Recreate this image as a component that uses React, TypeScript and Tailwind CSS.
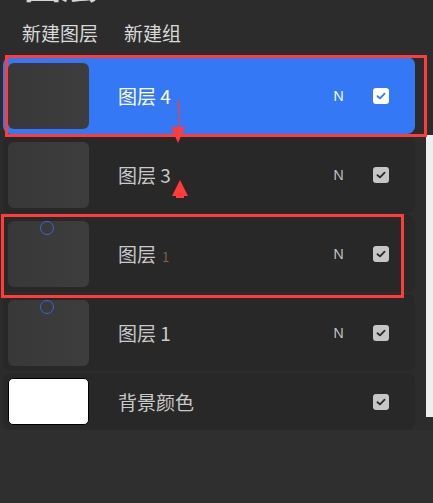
import React from "react";

type Layer = {
  name: string;
  selected?: boolean;
  dot?: boolean;
  glitch?: boolean;
  bg?: boolean;
};

const layers: Layer[] = [
  { name: "图层 4", selected: true },
  { name: "图层 3" },
  { name: "图层", dot: true, glitch: true },
  { name: "图层 1", dot: true },
  { name: "背景颜色", bg: true },
];

const Check = ({ selected }: { selected?: boolean }) => (
  <div
    className={`w-[16px] h-[16px] rounded-[3px] flex items-center justify-center ${
      selected ? "bg-white" : "bg-[#c6c6c6]"
    }`}
  >
    <svg width="10" height="8" viewBox="0 0 10 8" fill="none">
      <path
        d="M1.5 4.2 L4 6.4 L8.6 1.6"
        stroke={selected ? "#3478f6" : "#2a2a2a"}
        strokeWidth="1.8"
        strokeLinecap="round"
        strokeLinejoin="round"
      />
    </svg>
  </div>
);

const LayerRow = ({ layer }: { layer: Layer }) => {
  const rowBg = layer.selected ? "bg-[#3478f6]" : "bg-[#282828]";
  const textColor = layer.selected ? "text-white" : "text-[#cacaca]";

  if (layer.bg) {
    return (
      <div className={`h-[57px] shrink-0 rounded-[8px] flex items-center pl-[5px] ${rowBg}`}>
        <div className="w-[81px] h-[47px] rounded-[5px] bg-white border border-black" />
        <div className={`flex-1 ml-[29px] text-[19px] leading-none ${textColor}`}>
          {layer.name}
        </div>
        <div className="mr-[26px]">
          <Check />
        </div>
      </div>
    );
  }

  return (
    <div className={`h-[77px] shrink-0 rounded-[8px] flex items-center pl-[5px] ${rowBg}`}>
      <div className="relative w-[81px] h-[66px] rounded-[6px] bg-gradient-to-r from-[#383838] to-[#3d3d3d]">
        {layer.dot && (
          <svg className="absolute left-[31px] -top-[1px]" width="16" height="16" viewBox="0 0 16 16">
            <circle cx="8" cy="8" r="6.5" fill="none" stroke="#3566d8" strokeWidth="1" />
          </svg>
        )}
      </div>
      <div className={`flex-1 ml-[29px] text-[19px] leading-none ${textColor}`}>
        {layer.name}
        {layer.glitch && <span className="ml-[6px] text-[13px] text-[#7a6440]">1</span>}
      </div>
      <div
        className={`text-[14px] leading-none ${layer.selected ? "text-white" : "text-[#c4c4c4]"}`}
        style={{ fontFamily: '"Noto Sans", sans-serif' }}
      >
        N
      </div>
      <div className="ml-[29px] mr-[26px]">
        <Check selected={layer.selected} />
      </div>
    </div>
  );
};

export default function App() {
  return (
    <div
      className="relative w-[433px] h-[503px] overflow-hidden bg-[#2c2c2c]"
      style={{ fontFamily: '"Noto Sans CJK SC", "Noto Sans", sans-serif' }}
    >
      {/* header */}
      <div className="h-[57px] flex flex-col">
        <div className="-mt-[35px] pl-[24px] text-[37px] leading-none font-bold text-[#d6d6d6]">
          图层
        </div>
        <div className="flex gap-[26px] pl-[22px] mt-[21px] text-[19px] leading-none text-[#d9d9d9]">
          <span>新建图层</span>
          <span>新建组</span>
        </div>
      </div>

      {/* layer list */}
      <div className="flex h-[373px]">
        <div className="w-[426px] flex flex-col gap-[2px] pl-[3px] pr-[11px] overflow-hidden">
          {layers.map((layer, i) => (
            <LayerRow key={`${layer.name}-${i}`} layer={layer} />
          ))}
        </div>
        <div className="w-[7px] flex flex-col">
          <div className="h-[78px]" />
          <div className="h-[282px] bg-[#efefef]" />
        </div>
      </div>

      <div className="h-[73px] bg-[#2f2f2f]" />

      {/* annotations */}
      <div className="absolute left-[5px] top-[55px] w-[422px] h-[82px] border-[3px] border-[#ff3b3b]" />
      <div className="absolute left-[1px] top-[214px] w-[403px] h-[84px] border-[3px] border-[#ff3b3b]" />
      <svg className="absolute left-[168px] top-[98px]" width="20" height="48" viewBox="0 0 20 48">
        <polygon points="9.5,2 11,2 11.5,30 10.5,30" fill="#ff3b3b" />
        <polygon points="3,29 17,29 10,45" fill="#ff3b3b" />
      </svg>
      <svg className="absolute left-[170px] top-[178px]" width="20" height="22" viewBox="0 0 20 22">
        <polygon points="10,2 18,18 2,18" fill="#ff3b3b" />
        <rect x="6" y="17" width="8" height="3" fill="#ff3b3b" />
      </svg>
    </div>
  );
}
